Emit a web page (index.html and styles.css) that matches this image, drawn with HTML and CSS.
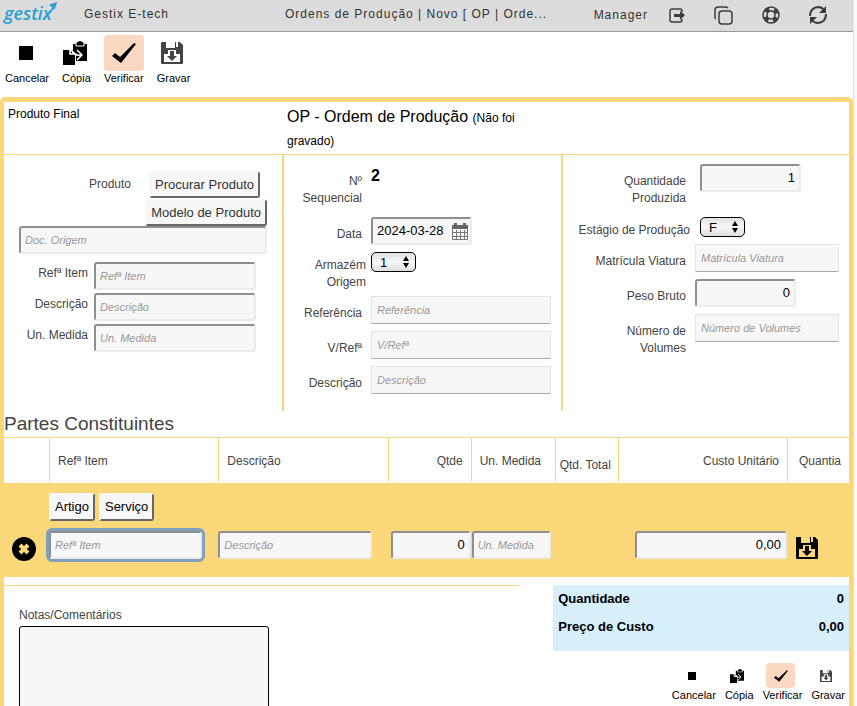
FILE: index.html
```html
<!DOCTYPE html>
<html lang="pt">
<head>
    <meta charset="UTF-8">
    <meta name="viewport" content="width=device-width, initial-scale=1.0">
    <title>Gestix - Ordem de Produção</title>
    <link rel="stylesheet" href="styles.css">
</head>
<body>

<!-- shared icons -->
<svg class="sprite" aria-hidden="true">
    <symbol id="i-stop" viewBox="0 0 14 14"><path d="M0 0h14v14H0z"/></symbol>
    <symbol id="i-copy" viewBox="0 0 24 24">
        <path d="M0 9h7l5 5v10H0z"/>
        <path d="M10 3h3V2l2-1q2-2 4 0l2 1v1h3v17H13v-7l-4-4h1z"/>
        <path d="M11 2h2v3h8V2h1" fill="none" stroke="#fff" stroke-width="1"/>
        <path d="M7 8v5h5M9 10q3 5 9 4M14 9l5 5-5 5" fill="none" stroke="#fff" stroke-width="1.5"/>
    </symbol>
    <symbol id="i-check" viewBox="0 0 24 20"><path d="M0 13l3-3 5 4L22 0l2 1L9 20z"/></symbol>
    <symbol id="i-save" viewBox="0 0 22 22">
        <path fill-rule="evenodd" d="M0 1q0-1 1-1h4v6h9V0h1v5h2V0h2l3 3v18q0 1-1 1H1q-1 0-1-1zM3 12v8h16v-8h-4V8H7v4z"/>
        <path d="M9 9h4v5h3l-5 5-5-5h3z"/>
    </symbol>
    <symbol id="i-updown" viewBox="0 0 8 14"><path d="M4 1l3 5H1zM4 13l3-5H1z"/></symbol>
</svg>

<header class="topbar">
    <a href="#" class="logo">gestix<svg viewBox="0 0 18 20"><path d="M2 19L14 5" stroke="#2b9fd2" stroke-width="2" fill="none"/><path d="M8 3l9-3-3 9z" fill="#2b9fd2"/></svg></a>
    <span class="company">Gestix E-tech</span>
    <span class="path">Ordens de Produção | Novo [ OP | Orde...</span>
    <span class="user">Manager</span>
    <nav class="top-icons">
        <a href="#" aria-label="Sair"><svg viewBox="0 0 22 22"><path d="M16 7V6q0-2-2-2H6Q4 4 4 6v9q0 2 2 2h8q2 0 2-2v-1"/><path d="M8 9h6V6l5 4-5 5v-3H8z" fill="#3c3c3c" stroke="none"/></svg></a>
        <a href="#" aria-label="Duplicar"><svg viewBox="0 0 22 22"><rect x="6" y="6" width="13" height="13" rx="3"/><path d="M3 14Q2 14 2 12V5q0-3 3-3h7q2 0 3 1"/></svg></a>
        <a href="#" aria-label="Ajuda"><svg viewBox="0 0 22 22"><circle cx="11" cy="10" r="8"/><circle cx="11" cy="10" r="4"/><circle cx="11" cy="10" r="6" stroke-width="4" stroke-dasharray="4.5 4.92" stroke-dashoffset="-2.5"/></svg></a>
        <a href="#" aria-label="Actualizar"><svg viewBox="0 0 22 22"><path d="M3 11Q3 3 11 2q4 0 6 3M19 9q0 8-8 9-4 0-6-3" stroke-width="2"/><path d="M19 1v7h-7zM3 19v-7h7z" fill="#3c3c3c" stroke="none"/></svg></a>
    </nav>
</header>

<div class="toolbar">
    <button type="button"><span class="icon"><svg class="stop"><use href="#i-stop"/></svg></span>Cancelar</button>
    <button type="button"><span class="icon"><svg class="copy"><use href="#i-copy"/></svg></span>Cópia</button>
    <button type="button"><span class="icon tile"><svg class="check"><use href="#i-check"/></svg></span>Verificar</button>
    <button type="button"><span class="icon"><svg class="save"><use href="#i-save"/></svg></span>Gravar</button>
</div>

<form class="panel">
    <div class="title-row">
        <div>Produto Final</div>
        <h1>OP - Ordem de Produção <small>(Não foi gravado)</small></h1>
    </div>

    <div class="columns">
        <section class="product">
            <div class="product-row">
                <label for="procurar">Produto</label>
                <button type="button" id="procurar" class="btn">Procurar Produto</button>
            </div>
            <button type="button" class="btn model">Modelo de Produto</button>
            <input type="text" class="box" placeholder="Doc. Origem" aria-label="Doc. Origem">
            <div class="item-list">
                <div class="item"><label for="ref">Refª Item</label><input type="text" id="ref" class="box" placeholder="Refª Item"></div>
                <div class="item"><label for="desc">Descrição</label><input type="text" id="desc" class="box" placeholder="Descrição"></div>
                <div class="item"><label for="un">Un. Medida</label><input type="text" id="un" class="box" placeholder="Un. Medida"></div>
            </div>
        </section>

        <section class="order">
            <div class="row tall"><span class="label">Nº Sequencial</span><strong class="number">2</strong></div>
            <div class="row">
                <label class="label" for="data">Data</label>
                <span class="date">
                    <input type="text" id="data" class="box short" value="2024-03-28">
                    <svg viewBox="0 0 16 17"><path d="M0 2h16v4H0zM2 0h3v2H2zM11 0h3v2h-3z" fill="#666"/><path d="M.5 6v10.500h15V6M0 9.500h16M0 13.500h16M4.500 7v9M8.500 7v9M12.500 7v9" stroke="#777" fill="none"/></svg>
                </span>
            </div>
            <div class="row pick">
                <label class="label" for="armazem">Armazém Origem</label>
                <span class="select"><select id="armazem"><option>1</option></select><svg><use href="#i-updown"/></svg></span>
            </div>
            <div class="row"><label class="label" for="referencia">Referência</label><input type="text" id="referencia" class="flat" placeholder="Referência"></div>
            <div class="row"><label class="label" for="vref">V/Refª</label><input type="text" id="vref" class="flat" placeholder="V/Refª"></div>
            <div class="row"><label class="label" for="descricao">Descrição</label><input type="text" id="descricao" class="flat" placeholder="Descrição"></div>
        </section>

        <section class="quantity">
            <div class="row tall indent"><label class="label" for="qtd">Quantidade Produzida</label><input type="text" id="qtd" class="box short num" value="1"></div>
            <div class="row pick indent">
                <label class="label" for="estagio">Estágio de Produção</label>
                <span class="select"><select id="estagio"><option>F</option></select><svg><use href="#i-updown"/></svg></span>
            </div>
            <div class="row"><label class="label" for="matricula">Matrícula Viatura</label><input type="text" id="matricula" class="flat" placeholder="Matrícula Viatura"></div>
            <div class="row"><label class="label" for="peso">Peso Bruto</label><input type="text" id="peso" class="box short num" value="0"></div>
            <div class="row"><label class="label" for="volumes">Número de Volumes</label><input type="text" id="volumes" class="flat" placeholder="Número de Volumes"></div>
        </section>
    </div>

    <h2>Partes Constituintes</h2>
    <table class="parts">
        <colgroup>
            <col class="c-del"><col><col><col class="c-qty"><col class="c-unit"><col class="c-total"><col><col class="c-amount">
        </colgroup>
        <thead>
            <tr>
                <th></th>
                <th>Refª Item</th>
                <th>Descrição</th>
                <th class="num">Qtde</th>
                <th>Un. Medida</th>
                <th class="total">Qtd. Total</th>
                <th class="num">Custo Unitário</th>
                <th class="num">Quantia</th>
            </tr>
        </thead>
        <tbody>
            <tr>
                <td class="del"><button type="button" class="icon-btn" aria-label="Apagar"><svg width="24" height="24" viewBox="0 0 24 24"><circle cx="12" cy="12" r="12"/><path d="M8 8l8 8M16 8l-8 8" stroke="#fad87a" stroke-width="4"/></svg></button></td>
                <td class="ref">
                    <div class="kinds"><button type="button" class="btn">Artigo</button><button type="button" class="btn">Serviço</button></div>
                    <input type="text" class="box active" placeholder="Refª Item" aria-label="Refª Item">
                </td>
                <td class="desc"><input type="text" class="box" placeholder="Descrição" aria-label="Descrição"></td>
                <td class="qty"><input type="text" class="box num" value="0" aria-label="Qtde"></td>
                <td class="unit"><input type="text" class="box" placeholder="Un. Medida" aria-label="Un. Medida"></td>
                <td></td>
                <td class="cost"><input type="text" class="box num" value="0,00" aria-label="Custo Unitário"></td>
                <td class="store"><button type="button" class="icon-btn" aria-label="Gravar linha"><svg width="22" height="22"><use href="#i-save"/></svg></button></td>
            </tr>
        </tbody>
    </table>

    <div class="bottom">
        <div class="notes">
            <label for="notas">Notas/Comentários</label>
            <textarea id="notas"></textarea>
        </div>
        <div class="summary">
            <table class="totals">
                <tr><th scope="row">Quantidade</th><td>0</td></tr>
                <tr><th scope="row">Preço de Custo</th><td>0,00</td></tr>
            </table>
            <div class="toolbar small">
                <button type="button"><span class="icon"><svg class="stop"><use href="#i-stop"/></svg></span>Cancelar</button>
                <button type="button"><span class="icon"><svg class="copy"><use href="#i-copy"/></svg></span>Cópia</button>
                <button type="button"><span class="icon tile"><svg class="check"><use href="#i-check"/></svg></span>Verificar</button>
                <button type="button"><span class="icon"><svg class="save"><use href="#i-save"/></svg></span>Gravar</button>
            </div>
        </div>
    </div>
</form>

</body>
</html>
```
FILE: styles.css
```css
* {
    box-sizing: border-box;
}
html {
    background-color: #f9f9f9;
}
body {
    margin: 0 3px 0 0;
    height: 100vh;
    overflow: hidden;
    background-color: #fff;
    border-right: 1px solid #e2e2e2;
    font-family: "Liberation Sans", Arial, sans-serif;
    font-size: 12px;
    line-height: 17px;
    color: #444;
}
button, input, select, textarea {
    font-family: inherit;
    margin: 0;
}
.sprite {
    display: none;
}

/* top bar */
.topbar {
    display: flex;
    height: 32px;
    padding-right: 24px;
    background-color: #dcdcdc;
    border-bottom: 1px solid #999;
    letter-spacing: 1px;
    line-height: 28px;
    color: #333;
}
.logo {
    position: relative;
    flex: 0 0 84px;
    padding-left: 4px;
    font-family: "Open Sans", sans-serif;
    font-size: 18px;
    font-style: italic;
    font-weight: 600;
    line-height: 26px;
    letter-spacing: 0;
    color: #2b9fd2;
    text-decoration: none;
}
.logo svg {
    position: absolute;
    left: 41px;
    top: 2px;
    width: 18px;
    height: 18px;
}
.company {
    flex: 0 0 201px;
}
.path {
    flex: 1;
    white-space: nowrap;
    overflow: hidden;
}
.user {
    margin-right: 18px;
    line-height: 30px;
}
.top-icons {
    display: flex;
    align-items: center;
    gap: 25px;
}
.top-icons a {
    height: 22px;
}
.top-icons svg {
    display: block;
    width: 22px;
    height: 22px;
    fill: none;
    stroke: #3c3c3c;
    stroke-width: 1.5;
}

/* action buttons */
.toolbar {
    display: flex;
    gap: 13px;
    padding: 3px 5px 12px;
}
.toolbar button {
    display: flex;
    flex-direction: column;
    align-items: center;
    padding: 0;
    border: none;
    background: none;
    font-size: 11px;
    line-height: 14px;
    color: #000;
}
.icon {
    display: flex;
    align-items: center;
    justify-content: center;
    height: 36px;
    margin-right: 3px;
}
.tile {
    width: 40px;
    margin-right: 0;
    border-radius: 4px;
    background-color: #fbd8c2;
}
.stop {
    width: 14px;
    height: 14px;
}
.copy {
    width: 24px;
    height: 24px;
}
.check {
    width: 24px;
    height: 20px;
}
.save {
    width: 22px;
    height: 22px;
    fill: #444;
}
.toolbar.small {
    justify-content: flex-end;
    gap: 9px;
    padding: 12px 4px;
}
.small .icon {
    height: 25px;
    margin-right: 4px;
}
.small .tile {
    width: 29px;
}
.small .stop {
    width: 8px;
    height: 8px;
}
.small .copy {
    width: 14px;
    height: 14px;
}
.small .check {
    width: 14px;
    height: 12px;
}
.small .save {
    width: 12px;
    height: 12px;
}

/* main panel */
.panel {
    border: 4px solid #fad87a;
    border-top-width: 5px;
    border-radius: 5px;
}
.title-row, .columns {
    display: grid;
    grid-template-columns: 278fr 279fr 288fr;
}
.title-row {
    padding: 3px 0;
    border-bottom: 1px solid #fad87a;
    line-height: 23px;
    color: #000;
}
.title-row div {
    padding-left: 4px;
    line-height: 18px;
}
h1 {
    margin: 0;
    padding: 0 5px;
    font-size: 16px;
    font-weight: normal;
}
h1 small {
    font-size: 12px;
    line-height: 12px;
}
.columns {
    min-height: 256px;
}
.order, .quantity {
    padding: 9px 10px 10px 0;
    border-left: 2px solid #fad87a;
}

/* inputs */
.box, .flat {
    display: block;
    width: 100%;
    min-width: 0;
    height: 28px;
    padding: 0 4px 1px;
    border: 2px solid #ebebeb;
    border-top-color: #8f8f8f;
    border-left-color: #8f8f8f;
    border-radius: 3px;
    background-color: #f7f7f7;
    font-size: 13px;
    color: #000;
}
.flat {
    padding: 0 5px 1px;
    border: 1px solid #e4e4e4;
    border-bottom-color: #aaa;
    border-radius: 1px;
}
::placeholder {
    font-size: 11px;
    font-style: italic;
    color: #999;
}
.short {
    width: 101px;
}
.num {
    text-align: right;
}
.active {
    outline: 3px solid #7f9fbb;
    outline-offset: 0;
}
.btn {
    height: 28px;
    padding: 0 4px 1px;
    border: 2px solid #f7f7f7;
    border-right-color: #666;
    border-bottom-color: #666;
    border-radius: 3px;
    background-color: #f7f7f7;
    font-size: 13px;
    color: #000;
}

/* product column */
.product {
    display: flex;
    flex-direction: column;
    padding: 16px 15px 0;
}
.product-row {
    display: flex;
    justify-content: flex-end;
    align-items: center;
    gap: 18px;
    padding-right: 7px;
}
.product .btn {
    height: 27px;
    color: #333;
}
.product .model {
    align-self: flex-end;
    margin-top: 1px;
}
.item-list {
    display: flex;
    flex-direction: column;
    gap: 3px;
    padding: 8px 11px 0 0;
}
.item {
    display: flex;
}
.item label {
    flex: 0 0 75px;
    padding: 3px 6px 0 0;
    text-align: right;
}

/* label + value rows */
.row {
    display: flex;
    align-items: flex-start;
    margin-bottom: 7px;
}
.label {
    flex: 0 0 87px;
    padding: 9px 9px 0 16px;
    text-align: right;
}
.quantity .label {
    flex-basis: 132px;
}
.tall {
    margin-bottom: 10px;
}
.pick {
    margin-bottom: 5px;
}
.pick .label {
    padding: 5px 5px 0 8px;
}
.indent .box, .indent .select {
    margin-left: 5px;
}
.number {
    font-size: 16px;
    line-height: 24px;
    color: #000;
}
.date, .select {
    position: relative;
}
.date svg {
    position: absolute;
    right: 4px;
    top: 6px;
    width: 16px;
    height: 17px;
}
.select select {
    display: block;
    appearance: none;
    width: 45px;
    height: 20px;
    padding: 0 8px;
    border: 1px solid #000;
    border-radius: 5px;
    background: linear-gradient(#e2e2e2, #f7f7f7 50%, #dedede);
    font-size: 13px;
    color: #000;
}
.select svg {
    position: absolute;
    right: 6px;
    top: 3px;
    width: 8px;
    height: 14px;
    pointer-events: none;
}

/* parts table */
h2 {
    margin: 0;
    font-size: 19px;
    font-weight: normal;
    line-height: 26px;
}
.parts {
    width: 100%;
    table-layout: fixed;
    border-spacing: 0;
    border-top: 1px solid #fad87a;
}
.c-del {
    width: 45px;
}
.c-qty {
    width: 83px;
}
.c-unit {
    width: 84px;
}
.c-total {
    width: 63px;
}
.c-amount {
    width: 62px;
}
.parts th {
    height: 45px;
    padding: 4px 8px 0;
    border-left: 1px solid #fad87a;
    border-bottom: 2px solid #fff;
    font-weight: normal;
    text-align: left;
    white-space: nowrap;
}
.parts th:first-child {
    border-left: none;
}
.parts th.num {
    text-align: right;
}
.parts th.total {
    padding: 12px 4px 0;
}
.parts td {
    height: 94px;
    padding: 0 0 18px;
    background-color: #fad87a;
    vertical-align: bottom;
}
.parts .del {
    padding: 0 8px 16px;
}
.parts .ref, .parts .desc {
    padding-right: 16px;
}
.parts .qty {
    padding-left: 3px;
}
.parts .unit {
    padding: 0 4px 18px 1px;
}
.parts .cost {
    padding-left: 17px;
}
.parts .store {
    padding-left: 9px;
}
.kinds {
    display: flex;
    gap: 4px;
    margin-bottom: 10px;
}
.icon-btn {
    display: block;
    padding: 0;
    border: none;
    background: none;
}
.icon-btn svg {
    display: block;
}

/* notes and totals */
.bottom {
    display: flex;
    justify-content: space-between;
    align-items: flex-start;
    padding-top: 8px;
}
.notes {
    width: 61%;
    padding: 21px 15px 20px;
    border-top: 1px solid #fad87a;
}
.notes label {
    display: block;
    margin-bottom: 2px;
}
.notes textarea {
    display: block;
    width: 250px;
    height: 120px;
    border: 1px solid #000;
    border-radius: 3px;
    background-color: #f7f7f7;
    resize: none;
}
.summary {
    width: 35%;
}
.totals {
    width: 100%;
    border-spacing: 0;
    padding-bottom: 10px;
    background-color: #d7eefb;
    font-size: 13px;
    font-weight: bold;
    line-height: 28px;
    color: #000;
}
.totals th, .totals td {
    padding: 0 5px;
    text-align: left;
}
.totals td {
    text-align: right;
}
```
